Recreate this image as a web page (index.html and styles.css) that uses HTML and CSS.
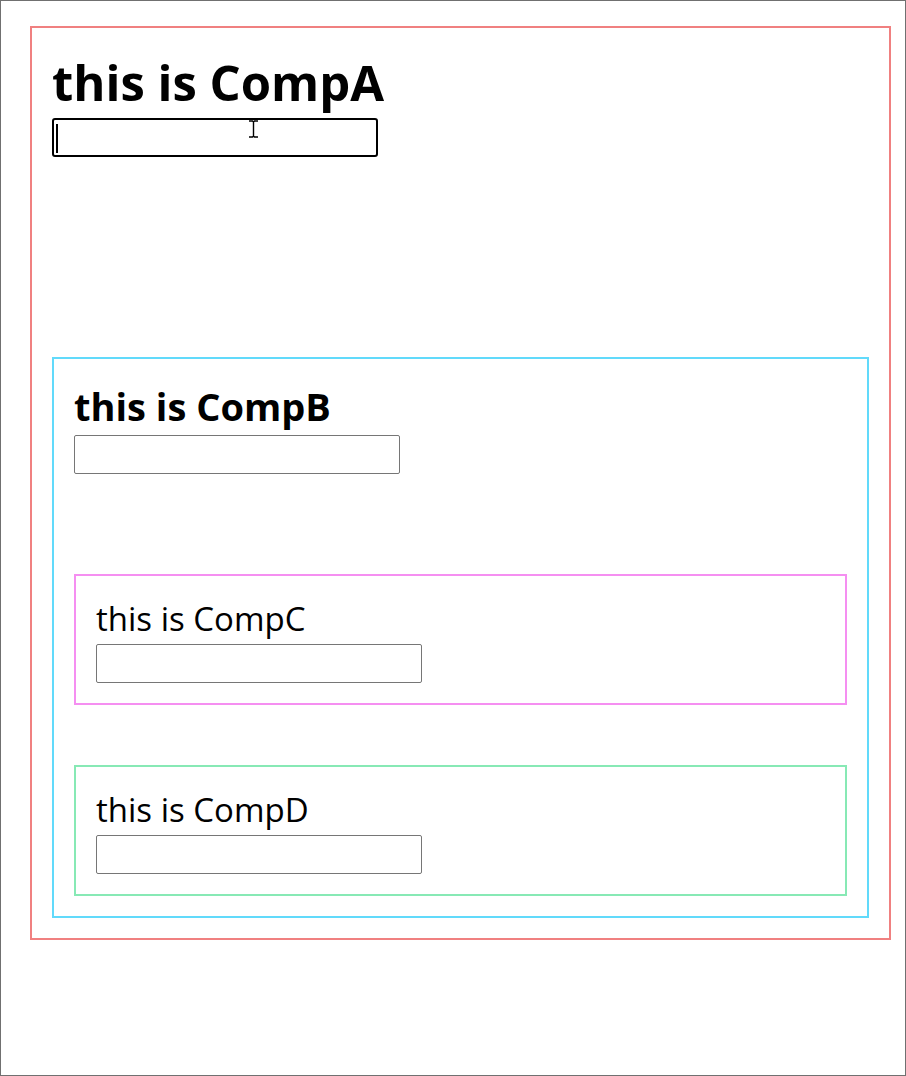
FILE: index.html
```html
<!DOCTYPE html>
<html lang="en">
<head>
  <meta charset="UTF-8" />
  <meta name="viewport" content="width=device-width, initial-scale=1.0"/>
  <title>Comp tree</title>
  <link rel="stylesheet" href="styles.css">
</head>
<body>

  <div class="frame">
    <div class="comp comp-a">
      <h1 class="title-a">this is CompA</h1>
      <div class="field-wrap field-gap-a">
        <input class="field field-focused" type="text">
        <span class="caret"></span>
        <svg class="ibeam" width="9" height="18" viewBox="0 0 9 18">
          <path d="M0 1h3.5l1 1 1-1H9M4.5 2v14M0 17h3.5l1-1 1 1H9" fill="none" stroke="#000" stroke-width="1.4"/>
        </svg>
      </div>

      <div class="comp comp-b">
        <h2 class="title-b">this is CompB</h2>
        <input class="field field-gap-b" type="text">

        <div class="comp comp-c">
          <h3 class="title-c">this is CompC</h3>
          <input class="field" type="text">
        </div>

        <div class="comp comp-d">
          <h3 class="title-c">this is CompD</h3>
          <input class="field" type="text">
        </div>
      </div>
    </div>
  </div>

</body>
</html>
```

FILE: styles.css
```css
body {
  margin: 0;
  font-family: 'Open Sans', 'Noto Sans', sans-serif;
  color: #000;
  background-color: #fff;
}

.frame {
  box-sizing: border-box;
  width: 906px;
  height: 1076px;
  border: 1px solid #707070;
  padding-top: 25px;
  overflow: hidden;
}

.comp {
  border: 2px solid;
  padding: 20px;
}

.comp-a {
  margin: 0 14px 0 29px;
  border-color: #f08080;
}

.comp-b {
  border-color: #61dafb;
}

.comp-c {
  border-color: #f58ff1;
  margin-bottom: 60px;
}

.comp-d {
  border-color: #87e9b5;
}

.title-a,
.title-b,
.title-c {
  margin: 0;
  white-space: nowrap;
}

.title-a {
  font-size: 49px;
  font-weight: 700;
  line-height: 68px;
}

.title-b {
  font-size: 38px;
  font-weight: 700;
  line-height: 54px;
}

.title-c {
  font-size: 33px;
  font-weight: 400;
  line-height: 46px;
}

.title-a + .field-wrap {
  margin-top: 2px;
}

.title-b + .field,
.title-c + .field {
  margin-top: 2px;
}

.field {
  display: block;
  box-sizing: border-box;
  width: 326px;
  height: 39px;
  margin: 0;
  padding: 0 4px;
  border: 1px solid #767676;
  border-radius: 2px;
  font-size: 16px;
  background: #fff;
}

.field-focused {
  border: 2px solid #000;
  border-radius: 3px;
  outline: none;
}

.field-wrap {
  position: relative;
  width: 326px;
}

.field-gap-a {
  margin-bottom: 200px;
}

.title-b + .field.field-gap-b {
  margin-bottom: 100px;
}

.caret {
  position: absolute;
  left: 4px;
  top: 6px;
  width: 2px;
  height: 29px;
  background: #000;
}

.ibeam {
  position: absolute;
  left: 197px;
  top: 2px;
}
```
